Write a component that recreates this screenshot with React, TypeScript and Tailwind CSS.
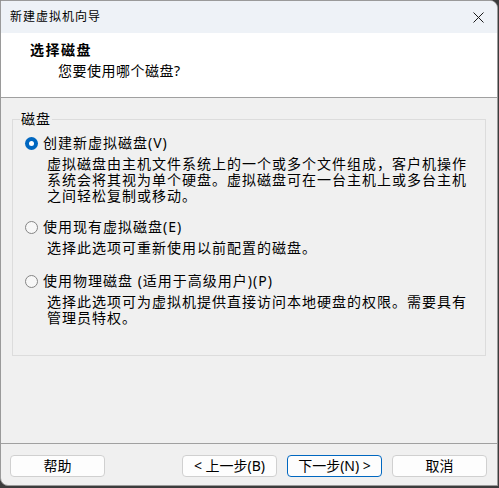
import type { ReactNode } from "react";

const font = { fontFamily: '"Noto Sans", "Noto Sans CJK SC", sans-serif' };

function Radio(props: { checked?: boolean }) {
  if (props.checked) {
    return (
      <span className="flex h-[13px] w-[13px] shrink-0 items-center justify-center rounded-full bg-[#0067c0]">
        <span className="h-[5px] w-[5px] rounded-full bg-white" />
      </span>
    );
  }
  return <span className="h-[13px] w-[13px] shrink-0 rounded-full border border-[#858585] bg-[#f7f7f7]" />;
}

function Option(props: { checked?: boolean; label: ReactNode; children: ReactNode; className?: string }) {
  return (
    <div className={props.className}>
      <div className="flex items-center gap-[5px] pl-[12px]">
        <Radio checked={props.checked} />
        <span className="text-[14px] leading-[18px] tracking-[1px] text-black">{props.label}</span>
      </div>
      <div className="mt-[4px] pl-[34px] pr-[12px] text-[14px] leading-[16px] tracking-[1px] text-black">
        {props.children}
      </div>
    </div>
  );
}

function Btn(props: { children: ReactNode; primary?: boolean }) {
  return (
    <button
      type="button"
      className={
        "h-[22px] w-[95px] rounded-[4px] bg-[#fdfdfd] text-[14px] leading-[20px] text-black " +
        (props.primary ? "border border-[#0067c0]" : "border border-[#d0d0d0]")
      }
    >
      {props.children}
    </button>
  );
}

export default function App() {
  return (
    <div className="h-[488px] w-[499px] bg-[#3c3c3c]" style={font}>
      <div className="flex h-[486px] w-[498px] flex-col overflow-hidden rounded-tr-[8px] rounded-bl-[8px] border border-[#9a9a9a] bg-[#f0f0f0]">
        {/* title bar */}
        <div className="flex h-[32px] shrink-0 items-center justify-between bg-[#eef2f7] pl-[9px] pr-[12px]">
          <span className="text-[12px] tracking-[1px] text-black">新建虚拟机向导</span>
          <svg width="11" height="11" viewBox="0 0 11 11" className="mr-[1px]">
            <path d="M0.5 0.5 L10.5 10.5 M10.5 0.5 L0.5 10.5" stroke="#1a1a1a" strokeWidth="1" />
          </svg>
        </div>

        {/* header */}
        <div className="h-[65px] shrink-0 border-b border-[#a0a0a0] bg-white pt-[8px]">
          <div className="pl-[29px] text-[14px] font-bold leading-[18px] tracking-[1.5px] text-black">选择磁盘</div>
          <div className="mt-[3px] pl-[57px] text-[14px] leading-[18px] tracking-[0.5px] text-black">您要使用哪个磁盘?</div>
        </div>

        {/* body */}
        <div className="flex-1 px-[11px] pt-[13px]">
          <fieldset className="h-[245px] border border-[#dcdcdc]">
            <legend className="ml-[7px] px-[1px] text-[14px] leading-[16px] tracking-[1px] text-black">磁盘</legend>
            <Option className="mt-[7px]" checked label="创建新虚拟磁盘(V)">
              虚拟磁盘由主机文件系统上的一个或多个文件组成，客户机操作系统会将其视为单个硬盘。虚拟磁盘可在一台主机上或多台主机之间轻松复制或移动。
            </Option>
            <Option className="mt-[14px]" label="使用现有虚拟磁盘(E)">
              选择此选项可重新使用以前配置的磁盘。
            </Option>
            <Option className="mt-[16px]" label="使用物理磁盘 (适用于高级用户)(P)">
              选择此选项可为虚拟机提供直接访问本地硬盘的权限。需要具有管理员特权。
            </Option>
          </fieldset>
        </div>

        {/* footer */}
        <div className="flex h-[42px] shrink-0 items-start justify-between border-t border-[#a0a0a0] pl-[9px] pr-[10px] pt-[11px]">
          <Btn>帮助</Btn>
          <div className="flex gap-[10px]">
            <Btn>&lt; 上一步(B)</Btn>
            <Btn primary>下一步(N) &gt;</Btn>
            <Btn>取消</Btn>
          </div>
        </div>
      </div>
    </div>
  );
}
